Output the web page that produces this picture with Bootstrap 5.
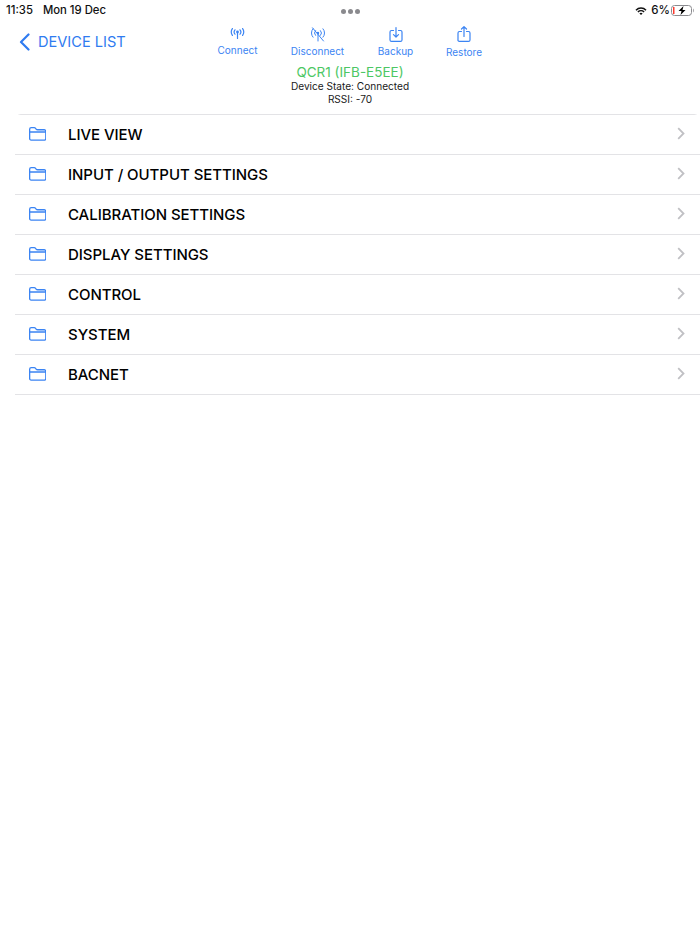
<!DOCTYPE html>
<html lang="en">
<head>
<meta charset="utf-8">
<title>Device</title>
<link href="https://cdn.jsdelivr.net/npm/bootstrap@5.3.0/dist/css/bootstrap.min.css" rel="stylesheet">
<style>
body{font-family:Inter,"Liberation Sans",sans-serif;background:#fff;color:#000;width:700px;height:934px;overflow:hidden;}
.statusbar{height:20px;padding:3px 5px 0 6px;font-size:11.3px;line-height:15px;color:#111;font-weight:500;}
.dategap{margin-left:10px;}
.dots{gap:2px;margin-top:6px;}
.dots i{display:block;width:5px;height:5px;border-radius:50%;background:#8a8a8e;}
.statusleft,.statusright{width:200px;}
.pct{font-size:11.5px;margin:0 1px 0 4px;}
.header{height:94px;}
.toolrow{height:45px;}
.backlink{width:207.5px;padding:12px 0 0 19px;color:#2f7bf0;font-size:14.6px;line-height:20px;gap:8px;}
.tool{color:#3b84f3;font-size:10px;line-height:13px;white-space:nowrap;text-align:center;flex:none;}
.tool svg{display:block;margin:0 auto;}
.t1{width:60px;padding-top:8px;}
.t2{width:100px;padding-top:7px;}
.t3{width:56px;padding-top:7px;}
.t4{width:81px;padding-top:6px;}
.t1 svg{margin-bottom:5px;}
.t2 svg,.t3 svg{margin-bottom:3px;}
.t4 svg{margin-bottom:4px;}
.devinfo{text-align:center;}
.devname{color:#4cc764;font-size:13.5px;line-height:15px;}
.devline{font-size:10.1px;line-height:13px;color:#1a1a1a;}
.menu{margin-left:15px;border-top:1px solid #e3e3e6;}
.menu .list-group-item{height:40px;padding:0 15px 0 14px;border:0;border-bottom:1px solid #e3e3e6;border-radius:0;font-size:15px;font-weight:500;color:#000;letter-spacing:-.05px;gap:22px;}
.rowtext{padding-top:1px;}
.fold,.chev{margin-bottom:2px;}
</style>
</head>
<body>
<svg class="d-none" aria-hidden="true">
  <symbol id="folder" viewBox="0 0 17 14"><path d="M.65 11.500V2.200A1.600 1.600 0 0 1 2.200.65h3c.8 0 1 .3 1.500.9l.4.5c.4.500.7.700 1.400.7h6.700a1.600 1.600 0 0 1 1.600 1.600v7.200a1.600 1.600 0 0 1-1.600 1.600H2.200A1.600 1.600 0 0 1 .65 11.500zM.65 5h15.700" fill="none" stroke="#3b84f3" stroke-width="1.300"/></symbol>
  <symbol id="chevron" viewBox="0 0 8 13"><path d="M1.200 1.200 6.500 6.500l-5.300 5.300" fill="none" stroke="#c0c0c4" stroke-width="1.800"/></symbol>
</svg>
<div class="statusbar d-flex justify-content-between align-items-start">
  <div class="statusleft text-nowrap">11:35<span class="dategap"></span>Mon 19 Dec</div>
  <div class="dots d-flex"><i></i><i></i><i></i></div>
  <div class="statusright d-flex justify-content-end align-items-center">
    <svg width="12" height="10" viewBox="0 0 12 10" aria-hidden="true"><path d="M1 4.200a7 7 0 0 1 10 0M2.900 6a4.400 4.400 0 0 1 6.200 0" fill="none" stroke="#111" stroke-width="1.500"/><path d="M4.400 7.400a2.300 2.300 0 0 1 3.200 0L6 9z" fill="#111"/></svg>
    <span class="pct">6%</span>
    <svg width="24" height="11" viewBox="0 0 24 11" aria-hidden="true"><rect x=".5" y=".5" width="20" height="10" rx="3" fill="none" stroke="#8a8a8e"/><rect x="2" y="2" width="1.500" height="7" fill="#ff3b30"/><path d="M12.500 1 7.500 6h3l-1 4 5-5h-3z" fill="#000"/><path d="M22 3.500c1 .4 1 3.600 0 4z" fill="#8a8a8e"/></svg>
  </div>
</div>
<div class="header">
  <div class="toolrow d-flex align-items-start">
    <a class="backlink d-flex align-items-center text-decoration-none flex-none" href="#">
      <svg width="11" height="18" viewBox="0 0 11 18" aria-hidden="true"><path d="M9.500 1.500 2 9l7.500 7.500" fill="none" stroke="#2f7bf0" stroke-width="2.200" stroke-linecap="round" stroke-linejoin="round"/></svg>
      <span>DEVICE LIST</span>
    </a>
    <div class="tool t1">
      <svg width="15" height="11" viewBox="0 0 15 11" fill="none" stroke="#3b84f3" stroke-width="1.200" stroke-linecap="round" aria-hidden="true"><circle cx="7.500" cy="4" r="1.400" fill="#3b84f3" stroke="none"/><path d="M7.500 5v5.500M5 1.800a3.400 3.400 0 0 0 0 4.400M10 1.800a3.400 3.400 0 0 1 0 4.400M2.400.6a6 6 0 0 0 0 6.800M12.600.6a6 6 0 0 1 0 6.800"/></svg>
      Connect
    </div>
    <div class="tool t2">
      <svg width="16" height="15" viewBox="0 0 16 15" fill="none" stroke="#3b84f3" stroke-width="1" stroke-linecap="round" aria-hidden="true"><circle cx="8" cy="6" r="1.200" fill="#3b84f3" stroke="none"/><path d="M8 7v7M5.500 3.600a3.500 3.500 0 0 0 0 4.800M10.500 3.600a3.500 3.500 0 0 1 0 4.800M3 1.800a6.200 6.200 0 0 0 0 8.400M13 1.800a6.200 6.200 0 0 1 0 8.400M2.500 .8 13.500 14"/></svg>
      Disconnect
    </div>
    <div class="tool t3">
      <svg width="14" height="15" viewBox="0 0 14 15" fill="none" stroke="#3b84f3" stroke-width="1.200" stroke-linecap="round" stroke-linejoin="round" aria-hidden="true"><path d="M4.500 3.500H2.500A1.500 1.500 0 0 0 1 5v8A1.500 1.500 0 0 0 2.500 14.400h9A1.500 1.500 0 0 0 13 13V5a1.500 1.500 0 0 0-1.500-1.500h-2M7 .6v9.400M4.500 7.700 7 10.200l2.500-2.500"/></svg>
      Backup
    </div>
    <div class="tool t4">
      <svg width="14" height="16" viewBox="0 0 14 16" fill="none" stroke="#3b84f3" stroke-width="1.200" stroke-linecap="round" stroke-linejoin="round" aria-hidden="true"><path d="M4.500 5.500H2.500A1.500 1.500 0 0 0 1 7v6.500A1.500 1.500 0 0 0 2.500 15.400h9a1.500 1.500 0 0 0 1.500-1.500V7a1.500 1.500 0 0 0-1.500-1.500h-2M7 10.500V.8M4.500 3 7 .6 9.500 3"/></svg>
      Restore
    </div>
  </div>
  <div class="devinfo">
    <div class="devname">QCR1 (IFB-E5EE)</div>
    <div class="devline">Device State: Connected</div>
    <div class="devline">RSSI: -70</div>
  </div>
</div>
<div class="list-group menu">
  <div class="list-group-item d-flex align-items-center"><svg class="fold" width="17" height="14" aria-hidden="true"><use href="#folder"/></svg><span class="rowtext flex-grow-1">LIVE VIEW</span><svg class="chev" width="8" height="13" aria-hidden="true"><use href="#chevron"/></svg></div>
  <div class="list-group-item d-flex align-items-center"><svg class="fold" width="17" height="14" aria-hidden="true"><use href="#folder"/></svg><span class="rowtext flex-grow-1">INPUT / OUTPUT SETTINGS</span><svg class="chev" width="8" height="13" aria-hidden="true"><use href="#chevron"/></svg></div>
  <div class="list-group-item d-flex align-items-center"><svg class="fold" width="17" height="14" aria-hidden="true"><use href="#folder"/></svg><span class="rowtext flex-grow-1">CALIBRATION SETTINGS</span><svg class="chev" width="8" height="13" aria-hidden="true"><use href="#chevron"/></svg></div>
  <div class="list-group-item d-flex align-items-center"><svg class="fold" width="17" height="14" aria-hidden="true"><use href="#folder"/></svg><span class="rowtext flex-grow-1">DISPLAY SETTINGS</span><svg class="chev" width="8" height="13" aria-hidden="true"><use href="#chevron"/></svg></div>
  <div class="list-group-item d-flex align-items-center"><svg class="fold" width="17" height="14" aria-hidden="true"><use href="#folder"/></svg><span class="rowtext flex-grow-1">CONTROL</span><svg class="chev" width="8" height="13" aria-hidden="true"><use href="#chevron"/></svg></div>
  <div class="list-group-item d-flex align-items-center"><svg class="fold" width="17" height="14" aria-hidden="true"><use href="#folder"/></svg><span class="rowtext flex-grow-1">SYSTEM</span><svg class="chev" width="8" height="13" aria-hidden="true"><use href="#chevron"/></svg></div>
  <div class="list-group-item d-flex align-items-center"><svg class="fold" width="17" height="14" aria-hidden="true"><use href="#folder"/></svg><span class="rowtext flex-grow-1">BACNET</span><svg class="chev" width="8" height="13" aria-hidden="true"><use href="#chevron"/></svg></div>
</div>
<script src="https://cdn.jsdelivr.net/npm/bootstrap@5.3.0/dist/js/bootstrap.bundle.min.js"></script>
</body>
</html>
